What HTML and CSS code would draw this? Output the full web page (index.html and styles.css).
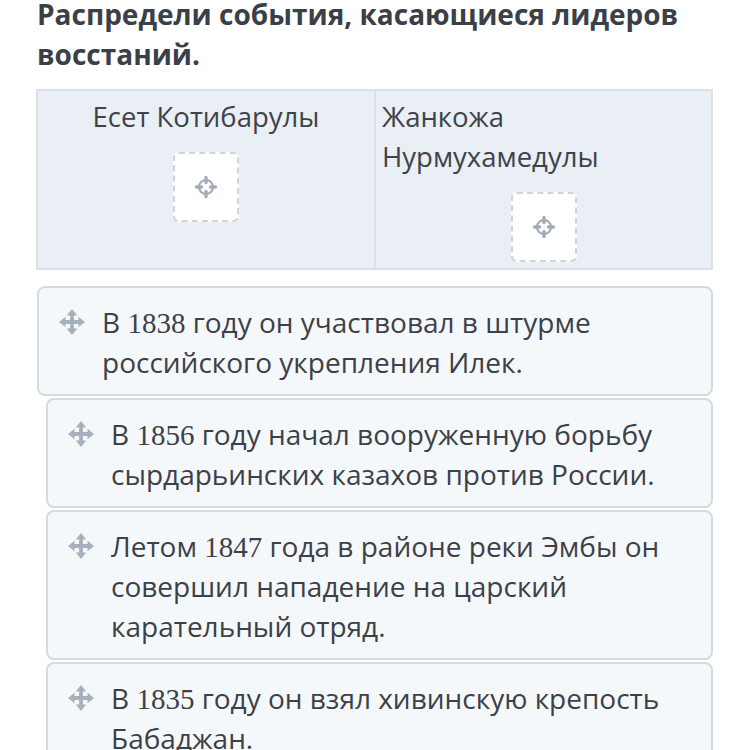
FILE: index.html
```html
<!DOCTYPE html>
<html lang="ru">
<head>
<meta charset="utf-8">
<link rel="stylesheet" href="styles.css">
</head>
<body>
<div class="page">
  <h1 class="title">Распредели события, касающиеся лидеров восстаний.</h1>

  <div class="table">
    <div class="cell cell-center">
      <div class="cell-label">Есет Котибарулы</div>
      <div class="drop">
        <svg class="drop-icon" viewBox="0 0 24 24" width="24" height="24">
          <circle cx="12" cy="12" r="7" fill="none" stroke="#a3acb7" stroke-width="2.2"/>
          <path d="M12 2.5v5M12 16.5v5M2.5 12h5M16.5 12h5" stroke="#a3acb7" stroke-width="3.4" stroke-linecap="round"/>
        </svg>
      </div>
    </div>
    <div class="cell cell-left">
      <div class="cell-label">Жанкожа Нурмухамедулы</div>
      <div class="drop">
        <svg class="drop-icon" viewBox="0 0 24 24" width="24" height="24">
          <circle cx="12" cy="12" r="7" fill="none" stroke="#a3acb7" stroke-width="2.2"/>
          <path d="M12 2.5v5M12 16.5v5M2.5 12h5M16.5 12h5" stroke="#a3acb7" stroke-width="3.4" stroke-linecap="round"/>
        </svg>
      </div>
    </div>
  </div>

  <div class="cards">
    <div class="card">
      <svg class="move" viewBox="0 0 22 22" width="26" height="26"><path d="M11 0L15.5 5.5H12.6V9.4H16.5V6.5L22 11L16.5 15.5V12.6H12.6V16.5H15.5L11 22L6.5 16.5H9.4V12.6H5.5V15.5L0 11L5.5 6.5V9.4H9.4V5.5H6.5Z" fill="#a7b1bc"/></svg>
      <p class="card-text">В <span class="num">1838</span> году он участвовал в штурме российского укрепления Илек.</p>
    </div>
    <div class="card card-shift">
      <svg class="move" viewBox="0 0 22 22" width="26" height="26"><path d="M11 0L15.5 5.5H12.6V9.4H16.5V6.5L22 11L16.5 15.5V12.6H12.6V16.5H15.5L11 22L6.5 16.5H9.4V12.6H5.5V15.5L0 11L5.5 6.5V9.4H9.4V5.5H6.5Z" fill="#a7b1bc"/></svg>
      <p class="card-text">В <span class="num">1856</span> году начал вооруженную борьбу сырдарьинских казахов против России.</p>
    </div>
    <div class="card card-shift">
      <svg class="move" viewBox="0 0 22 22" width="26" height="26"><path d="M11 0L15.5 5.5H12.6V9.4H16.5V6.5L22 11L16.5 15.5V12.6H12.6V16.5H15.5L11 22L6.5 16.5H9.4V12.6H5.5V15.5L0 11L5.5 6.5V9.4H9.4V5.5H6.5Z" fill="#a7b1bc"/></svg>
      <p class="card-text">Летом <span class="num">1847</span> года в районе реки Эмбы он совершил нападение на царский карательный отряд.</p>
    </div>
    <div class="card card-shift">
      <svg class="move" viewBox="0 0 22 22" width="26" height="26"><path d="M11 0L15.5 5.5H12.6V9.4H16.5V6.5L22 11L16.5 15.5V12.6H12.6V16.5H15.5L11 22L6.5 16.5H9.4V12.6H5.5V15.5L0 11L5.5 6.5V9.4H9.4V5.5H6.5Z" fill="#a7b1bc"/></svg>
      <p class="card-text">В <span class="num">1835</span> году он взял хивинскую крепость Бабаджан.</p>
    </div>
  </div>
</div>
</body>
</html>
```

FILE: styles.css
```css
* { box-sizing: border-box; }
html, body { margin: 0; padding: 0; background: #ffffff; }
body {
  font-family: "Open Sans", "Noto Sans", sans-serif;
  color: #3c4148;
  overflow: hidden;
}
.page {
  width: 750px;
  height: 750px;
  padding: 0 37px 0 37px;
  overflow: hidden;
}
.title {
  margin: -6px 0 15px 0;
  font-size: 28px;
  line-height: 40px;
  font-weight: 700;
  color: #3b3f48;
  padding-right: 20px;
}
.table {
  display: grid;
  grid-template-columns: 336px 1fr;
  margin-left: -1px;
  border: 2px solid #dbe1e6;
  background: #e9eff4;
}
.cell {
  padding: 6px 6px 6px 6px;
  display: flex;
  flex-direction: column;
  align-items: stretch;
}
.cell + .cell { border-left: 2px solid #dbe1e6; }
.cell-label {
  font-size: 27.5px;
  line-height: 40px;
  color: #3e4349;
}
.cell-center .cell-label { text-align: center; }
.cell-left .cell-label { text-align: left; padding-right: 60px; }
.drop {
  align-self: center;
  width: 66px;
  height: 70px;
  margin-top: 15px;
  background: #ffffff;
  border: 2px dashed #cfd4d9;
  border-radius: 6px;
  display: flex;
  align-items: center;
  justify-content: center;
}
.cards {
  margin-top: 16px;
  display: flex;
  flex-direction: column;
  gap: 2px;
}
.card {
  display: flex;
  align-items: flex-start;
  gap: 17px;
  padding: 14px 20px 12px 20px;
  background: #f5f8fb;
  border: 2px solid #d6dbe0;
  border-radius: 8px;
}
.card-shift { margin-left: 9px; }
.move { flex: none; margin-top: 7px; }
.card-text {
  margin: 0;
  font-size: 28px;
  line-height: 40px;
  color: #3c4148;
}
.num {
  font-family: "Liberation Serif", "DejaVu Serif", serif;
  font-size: 29px;
  line-height: 1;
}
```
